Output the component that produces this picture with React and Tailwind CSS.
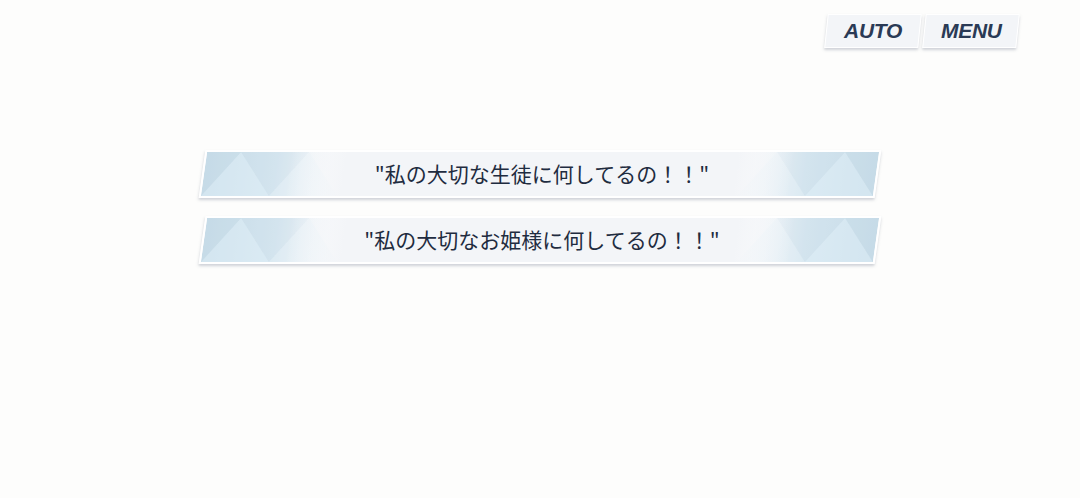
const choices = ['"私の大切な生徒に何してるの！！"', '"私の大切なお姫様に何してるの！！"'];

const Facets = ({ flip }) => (
  <svg
    className={`absolute top-0 h-full w-[140px] ${flip ? 'right-0 -scale-x-100' : 'left-0'}`}
    viewBox="0 0 140 48"
    preserveAspectRatio="none"
  >
    <defs>
      <linearGradient id={flip ? 'fr' : 'fl'} x1="0" x2="1" y1="0" y2="0">
        <stop offset="0" stopColor="#c8dce8" />
        <stop offset="0.5" stopColor="#d8e8f1" />
        <stop offset="1" stopColor="#f3f5f8" stopOpacity="0" />
      </linearGradient>
      <linearGradient id={flip ? 'mr' : 'ml'} x1="0" x2="1" y1="0" y2="0">
        <stop offset="0" stopColor="#fff" stopOpacity="0" />
        <stop offset="0.6" stopColor="#fff" stopOpacity="0" />
        <stop offset="1" stopColor="#f3f5f8" stopOpacity="1" />
      </linearGradient>
    </defs>
    <rect x="0" y="0" width="140" height="48" fill={`url(#${flip ? 'fr' : 'fl'})`} />
    <polygon points="0,48 34,0 68,48" fill="#dcecf5" opacity="0.55" />
    <polygon points="34,0 68,48 102,0" fill="#c6dbe7" opacity="0.3" />
    <polygon points="68,48 102,0 136,48" fill="#e0eef6" opacity="0.4" />
    <polygon points="0,0 34,0 0,48" fill="#c4d9e5" opacity="0.4" />
    <rect x="0" y="0" width="140" height="48" fill={`url(#${flip ? 'mr' : 'ml'})`} />
  </svg>
);

const ChoiceButton = ({ text }) => (
  <div className="relative w-[676px] h-[48px] skew-x-[-8deg] overflow-hidden border-2 border-white bg-[#f3f5f8] shadow-[0_2px_3px_rgba(120,130,145,0.35)]">
    <Facets />
    <Facets flip />
    <div className="relative skew-x-[8deg] flex h-full items-center justify-center pl-[4px]">
      <span className="text-[21px] font-normal text-[#1f2c40]" style={{ fontFamily: '"Noto Sans CJK JP", "Noto Sans", sans-serif' }}>
        {text}
      </span>
    </div>
  </div>
);

const TopButton = ({ label }) => (
  <button className="w-[94px] h-[34px] skew-x-[-6deg] bg-[#f3f5f8] border border-white shadow-[0_2px_3px_rgba(120,130,145,0.35)] flex items-center justify-center">
    <span className="skew-x-[6deg] italic font-bold text-[21px] tracking-[-0.3px] text-[#2a3a55]" style={{ fontFamily: '"Liberation Sans", Arial, sans-serif' }}>
      {label}
    </span>
  </button>
);

const App = () => {
  return (
    <div className="w-[1080px] h-[498px] bg-[#fdfdfc] flex flex-col overflow-hidden">
      <div className="flex justify-end gap-[4px] pt-[14px] pr-[62px]">
        <TopButton label="AUTO" />
        <TopButton label="MENU" />
      </div>

      <div className="mt-[102px] flex flex-col items-center gap-[18px]">
        {choices.map((c) => (
          <ChoiceButton key={c} text={c} />
        ))}
      </div>
    </div>
  );
};

export default App;
